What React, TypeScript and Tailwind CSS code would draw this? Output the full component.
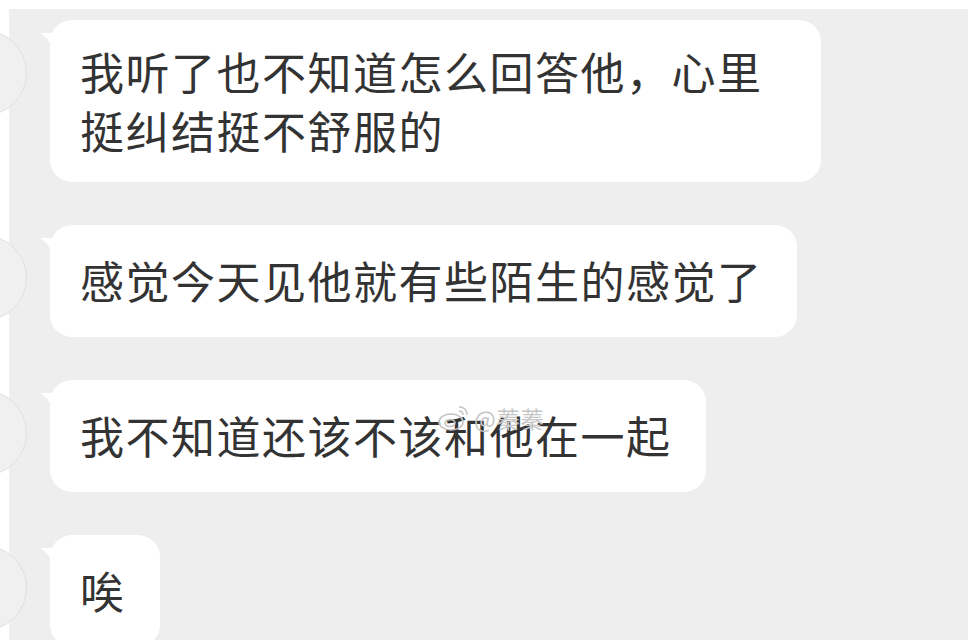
import React from 'react';

const FONT = '"Noto Sans CJK SC", "Noto Sans", sans-serif';

// little tail on the left of each bubble
const Tail = () => (
    <svg className="absolute left-[-10px] top-[13px]" width="12" height="16" viewBox="0 0 12 16">
        <path d="M0 0 L12 0 L12 15 Q8 4 0 0 Z" fill="#ffffff" />
    </svg>
);

const Avatar = () => (
    <div className="w-[86px] h-[86px] shrink-0 rounded-full border border-[#e0e0e0] bg-[#f0f0f0] ml-[-68px] mr-[23px] mt-[10px]" />
);

type Msg = { lines: string[]; pad: string; width?: string; watermark?: boolean };

const messages: Msg[] = [
    { lines: ['我听了也不知道怎么回答他，心里', '挺纠结挺不舒服的'], pad: 'pt-[22px] pb-[22px]', width: 'w-[771px]' },
    { lines: ['感觉今天见他就有些陌生的感觉了'], pad: 'pt-[26px] pb-[27px]' },
    { lines: ['我不知道还该不该和他在一起'], pad: 'pt-[26px] pb-[27px]', watermark: true },
    { lines: ['唉'], pad: 'pt-[26px] pb-[27px]' },
];

const Watermark = () => (
    <div className="absolute left-[387px] top-[23px] flex items-center gap-[3px] text-[#c6c6c6] pointer-events-none">
        <svg width="34" height="30" viewBox="0 0 34 30" fill="none" stroke="#c4c4c4" strokeWidth="1.6">
            <ellipse cx="14" cy="19" rx="12" ry="8" />
            <ellipse cx="13" cy="20" rx="5" ry="3.5" />
            <path d="M22 4 Q30 4 30 12" />
            <path d="M22 8 Q26 8 26 12" />
        </svg>
        <span className="text-[23px] leading-none tracking-[1px]">@蓁蓁</span>
    </div>
);

export default function App() {
    return (
        <div className="w-[978px] h-[640px] bg-white overflow-hidden" style={{ fontFamily: FONT }}>
            <div className="ml-[9px] mt-[9px] w-[959px] h-[640px] bg-[#eeeeee] pt-[11px] flex flex-col gap-[43px]">
                {messages.map((m, i) => (
                    <div key={i} className="flex items-start">
                        <Avatar />
                        <div className={`relative bg-white rounded-[22px] pl-[30px] pr-[34px] ${m.pad} ${m.width ?? ''}`}>
                            <Tail />
                            {m.lines.map((l, j) => (
                                <div key={j} className="text-[44px] leading-[59px] tracking-[1.5px] text-[#333333] whitespace-nowrap">
                                    {l}
                                </div>
                            ))}
                            {m.watermark && <Watermark />}
                        </div>
                    </div>
                ))}
            </div>
        </div>
    );
}
